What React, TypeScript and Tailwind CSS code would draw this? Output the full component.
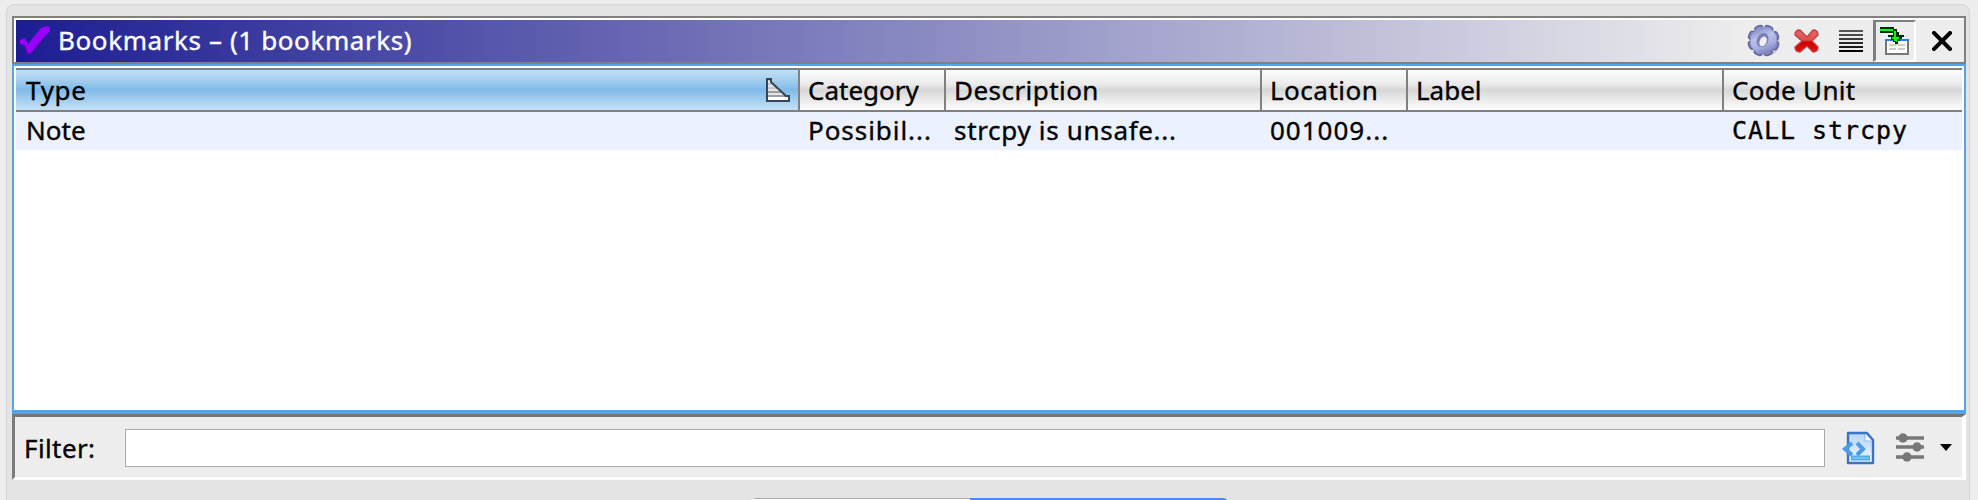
import React from "react";

function Cell({ w, children, cls = "pl-2" }: { w: string; children?: React.ReactNode; cls?: string }) {
  return <div className={`${w} shrink-0 whitespace-nowrap ${cls}`}>{children}</div>;
}

const headBg = "bg-[linear-gradient(180deg,#fcfcfc_0%,#ebebeb_35%,#d6d6d6_50%,#e6e6e6_68%,#fcfcfc_100%)]";
const selBg = "bg-[linear-gradient(180deg,#c3def4_0%,#9dcbed_30%,#7fb9e8_50%,#9dcbed_70%,#c6e0f5_100%)]";
const head = `border-r-2 border-[#808080] pl-2 ${headBg}`;

function Gear() {
  const teeth = [0, 45, 90, 135, 180, 225, 270, 315];
  return (
    <svg width="34" height="34" viewBox="0 0 34 34">
      <defs>
        <linearGradient id="gear" x1="0" y1="0" x2="1" y2="1">
          <stop offset="0" stopColor="#6a6eb0" />
          <stop offset=".4" stopColor="#bcc2ec" />
          <stop offset=".65" stopColor="#a4aade" />
          <stop offset="1" stopColor="#5e629e" />
        </linearGradient>
      </defs>
      <ellipse cx="19" cy="19" rx="14" ry="13" fill="#000" opacity=".16" />
      <g transform="translate(16.5 16.5) rotate(24)">
        <g stroke="#5c609c" strokeWidth="1.4">
          {teeth.map((a) => (
            <rect key={a} x="-4.2" y="-15.4" width="8.4" height="8" rx="3" fill="#8589c4" transform={`rotate(${a})`} />
          ))}
        </g>
        <ellipse rx="13" ry="13.4" fill="url(#gear)" />
        <ellipse cx="-1" rx="5.6" ry="7.4" fill="#7a7eb8" />
        <ellipse cx="0" cy="1" rx="3.4" ry="5.2" fill="#ededed" />
      </g>
    </svg>
  );
}

export default function App() {
  return (
    <div className="h-[500px] w-[1978px] overflow-hidden bg-[#ededed] pl-[6px] pt-1 font-['Noto_Sans',sans-serif] text-[26px] text-black [-webkit-text-stroke:0.35px_currentColor]">
      <div className="flex h-[520px] w-[1964px] flex-col rounded-[8px] border border-[#d6d6d6] bg-[#e4e4e4] pl-[5px] pt-[11px]">
        <div className="h-12 w-[1954px] shrink-0 border-2 border-[#808080]">
          <div className="flex h-full items-center border-l-2 border-t-2 border-white bg-[linear-gradient(90deg,#1d1d93_0px,#ededed_1730px)] text-white">
            <svg className="ml-1 shrink-0" width="30" height="30" viewBox="0 0 30 30">
              <path d="M0 14L5 12L8 18L21 2Q26-1 30 1V5L26 9L11 27L8 28L4 19L0 18Z" fill="#9a00ff" />
              <path d="M4 19L8 28L11 27L26 9" fill="none" stroke="#6a00bd" strokeWidth="1.6" />
            </svg>
            <span className="ml-[8px] whitespace-nowrap pb-[2px] leading-[38px] tracking-[0.6px]">Bookmarks – (1 bookmarks)</span>
            <div className="ml-auto flex h-full items-center">
              <Gear />
              <svg className="ml-[13px] mr-[1px]" width="26" height="26" viewBox="0 0 26 26">
                <defs>
                  <linearGradient id="red" x1="0" y1="0" x2="0" y2="1">
                    <stop offset="0" stopColor="#e06868" />
                    <stop offset=".46" stopColor="#dd5050" />
                    <stop offset=".54" stopColor="#cc0000" />
                    <stop offset="1" stopColor="#e41010" />
                  </linearGradient>
                </defs>
                <path d="M6 2L13 9L19 2Q24 2 24 7L18 13L24 19Q24 24 19 24L13 18L6 24Q1 24 1 19L8 13L1 7Q1 2 6 2Z" fill="url(#red)" stroke="#c04040" strokeWidth="1.4" strokeLinejoin="round" />
              </svg>
              <svg className="ml-[18px]" width="24" height="22" viewBox="0 0 24 22">
                {["#555", "#4a4a4a", "#3a3a3a", "#2a2a2a", "#1a1a1a", "#000"].map((c, i) => (
                  <rect key={i} y={i * 4} width="24" height="2" fill={c} />
                ))}
              </svg>
              <div className="ml-[10px] flex h-[42px] w-[43px] items-center justify-center border-b-2 border-l-[3px] border-r-2 border-t-2 border-b-white border-l-[#7f7f7f] border-r-white border-t-[#7f7f7f] bg-[#ededed]">
                <svg width="30" height="30" viewBox="0 0 30 30" shapeRendering="crispEdges">
                  <path d="M6 14H28V28H6Z" fill="#fff" stroke="#777" strokeWidth="2" />
                  <path d="M5 14H29" stroke="#1e80ff" strokeWidth="2" />
                  <path d="M9 19H25M9 23H25" stroke="#ccc" strokeWidth="2" />
                  <path d="M17 19V27" stroke="#fff" strokeWidth="2" />
                  <path d="M0 1H14V3H17V6H19V9H24V11H22V13H20V15H18V18H15V16H13V14H11V11H8V9H13V7H0Z" fill="#062806" />
                  <path d="M0 3H13V5H16V11H19V13H17V16H16V15H14V13H12V11H14V5H0Z" fill="#00ff18" />
                </svg>
              </div>
              <svg className="ml-[16px] mr-[12px]" width="20" height="20" viewBox="0 0 20 20">
                <path d="M2 2L18 18M18 2L2 18" stroke="#000" strokeWidth="4" strokeLinecap="square" />
              </svg>
            </div>
          </div>
        </div>
        <div className="h-[350px] w-[1954px] shrink-0 border-x-2 border-b-4 border-t-2 border-[#55a5e6] bg-white px-[2px] pt-[2px]">
          <div className="flex h-11 border-y-2 border-[#808080] leading-[41px]">
            <Cell w="w-[784px]" cls={`flex items-center justify-between border-r-2 border-[#808080] pl-[10px] pr-2 ${selBg}`}>
              <span className="tracking-[0.7px]">Type</span>
              <svg width="24" height="24" viewBox="0 0 24 24">
                <path d="M1 1H5V5H9V9H13V13H17V17H21V20H23V23H1Z" fill="#c8c8c8" />
                <path d="M2 4H5M2 8H9M2 12H13M2 16H17" stroke="#e4e4e4" strokeWidth="2" />
                <path d="M2 14H15M2 18H19" stroke="#909090" strokeWidth="1.4" />
                <path d="M2 20.5H22" stroke="#fff" strokeWidth="3" />
                <path d="M1 1H5V4L20 18H23V23H1Z" fill="none" stroke="#354555" strokeWidth="2" />
              </svg>
            </Cell>
            <Cell w="w-[146px]" cls={head}>Category</Cell>
            <Cell w="w-[316px]" cls={`tracking-[0.45px] ${head}`}>Description</Cell>
            <Cell w="w-[146px]" cls={`tracking-[0.5px] ${head}`}>Location</Cell>
            <Cell w="w-[316px]" cls={head}>Label</Cell>
            <Cell w="w-[238px]" cls={`pl-2 tracking-[0.3px] ${headBg}`}>Code Unit</Cell>
          </div>
          <div className="flex h-[38px] bg-[#ebf1ff] leading-[36px]">
            <Cell w="w-[784px]" cls="pl-[10px]">Note</Cell>
            <Cell w="w-[146px]" cls="pl-2 tracking-[0.95px]">Possibil...</Cell>
            <Cell w="w-[316px]" cls="pl-2 tracking-[0.68px]">strcpy is unsafe...</Cell>
            <Cell w="w-[146px]" cls="pl-2 tracking-[1px]">001009...</Cell>
            <Cell w="w-[316px]" />
            <Cell w="w-[238px]" cls="pl-2 font-['DejaVu_Sans_Mono',monospace] text-[25px] leading-[38px] tracking-[0.95px]">CALL strcpy</Cell>
          </div>
        </div>
        <div className="flex h-[66px] w-[1954px] shrink-0 items-center border-b-[3px] border-l-[3px] border-r-4 border-t-[3px] border-b-white border-l-[#7c7c7c] border-r-white border-t-[#757575] bg-[#ededed] pt-[2px]">
          <span className="ml-[9px] w-[101px] tracking-[0.4px]">Filter:</span>
          <div className="h-[38px] w-[1700px] border border-[#aaaaaa] bg-white" />
          <svg className="ml-[17px]" width="33" height="34" viewBox="0 0 33 34">
            <defs>
              <linearGradient id="page" x1="0" y1="0" x2="0" y2="1">
                <stop offset="0" stopColor="#b4d4f8" />
                <stop offset="1" stopColor="#f2f8ff" />
              </linearGradient>
            </defs>
            <path d="M6 2H25L31 9V32H6Z" fill="url(#page)" stroke="#3c72c4" strokeWidth="2.4" strokeLinejoin="round" />
            <path d="M23 3V10H30" fill="#fff" stroke="#8ab8ee" />
            <path d="M9 27H28" stroke="#4aa4ec" strokeWidth="5" />
            <path d="M10 27H27" stroke="#6cc4fa" strokeWidth="2.5" />
            <path d="M10 12L3 18L10 24M15 12L21 18L15 24" fill="none" stroke="#4a9be8" strokeWidth="4" />
          </svg>
          <svg className="ml-[21px]" width="28" height="30" viewBox="0 0 28 30" fill="#777">
            <path d="M0 5H28M0 14H28M0 24H28" stroke="#777" strokeWidth="3.4" />
            <circle cx="7" cy="5" r="4.7" />
            <circle cx="21" cy="14" r="4.7" />
            <circle cx="11" cy="24" r="4.7" />
          </svg>
          <svg className="-mt-[2px] ml-[16px]" width="12" height="7" viewBox="0 0 12 7"><path d="M0 0H12L6 7Z" /></svg>
        </div>
        <div className="ml-[738px] mt-[18px] flex h-6 w-[479px] shrink-0 overflow-hidden rounded-[6px]">
          <div className="w-[220px] border-t border-[#aaa] bg-white" />
          <div className="grow bg-[#4a8af8]" />
        </div>
      </div>
    </div>
  );
}
